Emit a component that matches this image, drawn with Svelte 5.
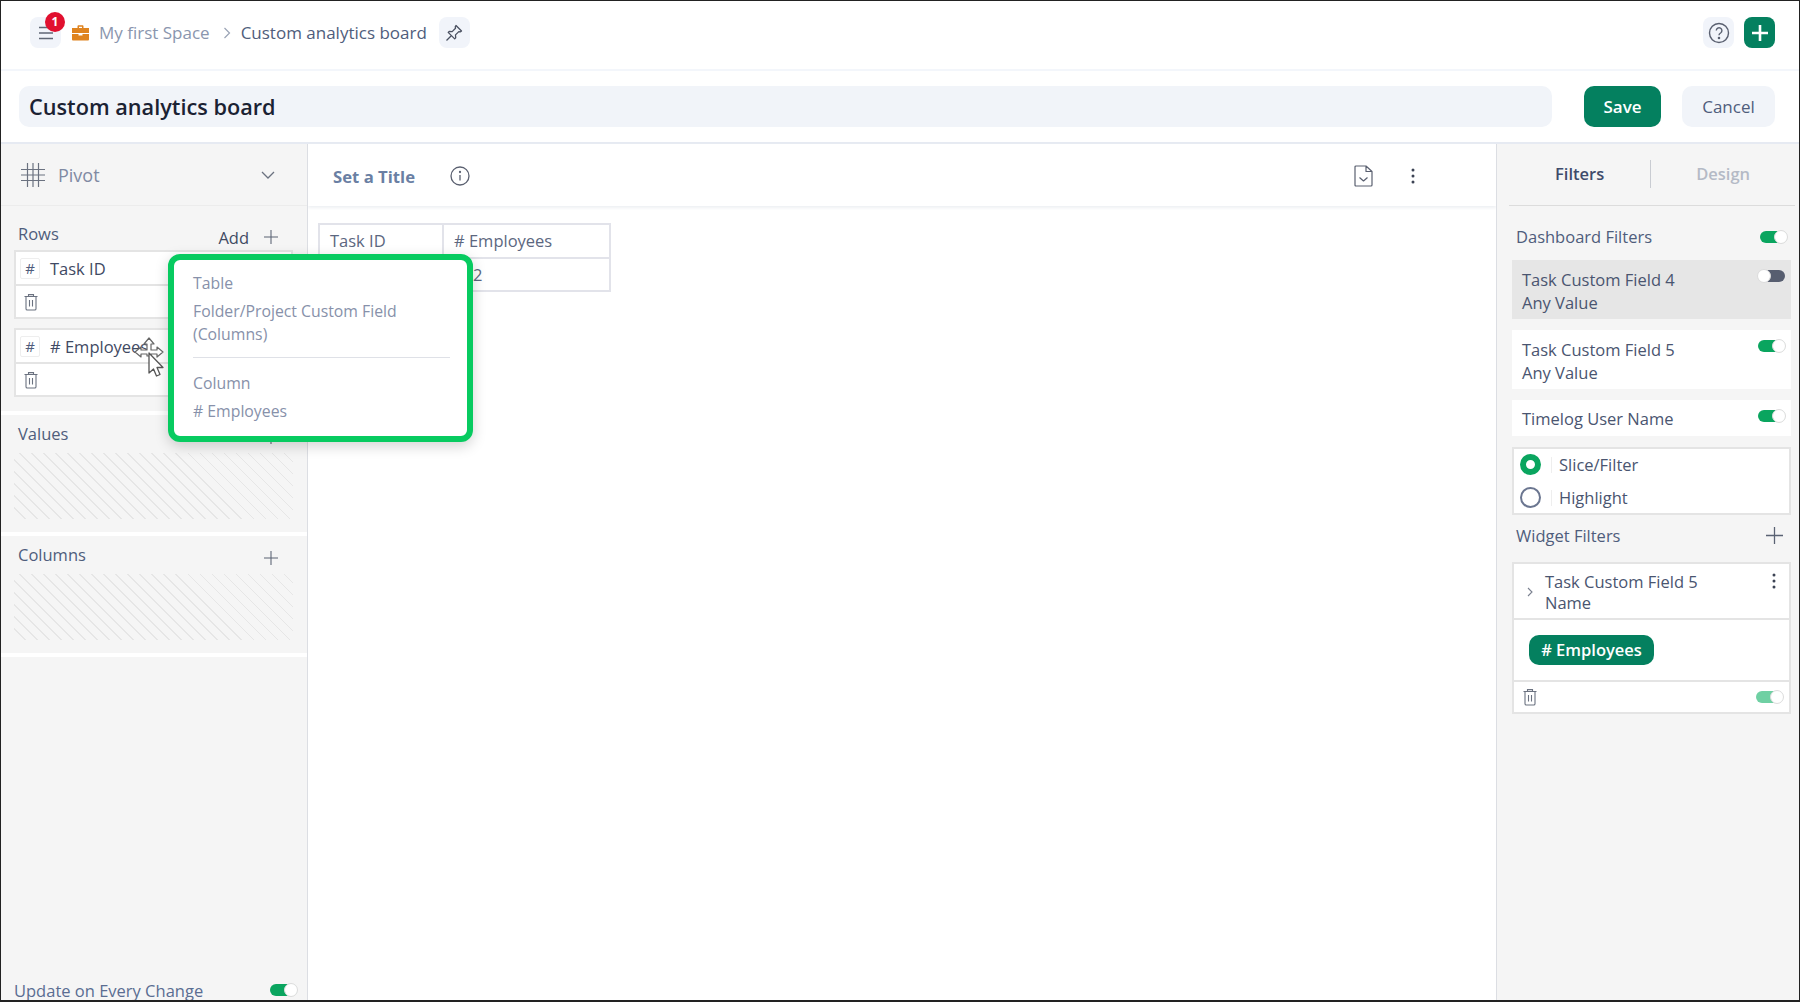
<script>
  const rowFields = ['Task ID', '# Employees'];
</script>

{#snippet trash()}
  <svg class="trash" width="16" height="18" viewBox="0 0 16 18" fill="none" stroke="#6b7280" stroke-width="1.1"><path d="M1.5 3.5h13M5.5 3.5V1.6h5v1.9M3 3.5v12.2q0 1.3 1.3 1.3h7.4q1.3 0 1.3-1.3V3.5M6.5 7v6.5M9.5 7v6.5"/></svg>
{/snippet}
{#snippet plus(size = 16)}
  <svg width={size} height={size} viewBox="0 0 16 16" stroke="#5a6273" stroke-width="1.2"><path d="M8 0v16M0 8h16"/></svg>
{/snippet}
{#snippet kebab()}
  <svg width="4" height="16" viewBox="0 0 4 16" fill="#3c4354"><circle cx="2" cy="2" r="1.5"/><circle cx="2" cy="8" r="1.5"/><circle cx="2" cy="14" r="1.5"/></svg>
{/snippet}

<div class="page">
  <header class="topbar">
    <button class="iconbtn menu">
      <svg width="16" height="14" viewBox="0 0 16 14" stroke="#5f6675" stroke-width="1.3"><path d="M1 1.5h14M1 7h14M1 12.5h14"/></svg>
      <span class="badge">1</span>
    </button>
    <svg class="case" width="17" height="16" viewBox="0 0 17 16"><path fill="#df8420" d="M5.5 3V1.2Q5.5.3 6.4.3h4.2q.9 0 .9.9V3H17v5H0V3zM7 3h3V1.8H7zM0 9h6.5v1.6h4V9H17v5.6q0 .9-.9.9H.9q-.9 0-.9-.9z"/></svg>
    <span class="crumb">My first Space</span>
    <svg class="sep" width="8" height="12" viewBox="0 0 8 12" fill="none" stroke="#9aa3b5" stroke-width="1.2"><path d="M1.5 1l5 5-5 5"/></svg>
    <span class="crumb current">Custom analytics board</span>
    <button class="iconbtn pin">
      <svg width="18" height="18" viewBox="0 0 18 18" fill="none" stroke="#4a5060" stroke-width="1.3" stroke-linejoin="round"><path d="M11 1.500l5.500 5.500-1 .8-1.700-.2-3.300 3.300.2 3-1 1-6.500-6.500 1-1 3 .2 3.300-3.300-.2-1.700zM6 12l-4.500 4.500"/></svg>
    </button>
    <span class="spacer"></span>
    <button class="iconbtn help">
      <svg width="22" height="22" viewBox="0 0 22 22" fill="none" stroke="#5a6070" stroke-width="1.4"><circle cx="11" cy="11" r="9.500"/><path d="M8.300 8.600a2.800 2.800 0 1 1 4.300 2.400c-1 .6-1.600 1.100-1.600 2.200"/><circle cx="11" cy="16" r=".6" fill="#5a6070"/></svg>
    </button>
    <button class="iconbtn add">
      <svg width="16" height="16" viewBox="0 0 16 16" stroke="#fff" stroke-width="2.600"><path d="M8 0v16M0 8h16"/></svg>
    </button>
  </header>

  <div class="titlebar">
    <div class="titleinput">Custom analytics board</div>
    <button class="btn save">Save</button>
    <button class="btn cancel">Cancel</button>
  </div>

  <main class="body">
    <aside class="left">
      <div class="pivot">
        <svg width="24" height="24" viewBox="0 0 24 24" stroke="#6b7280" stroke-width="1.200"><path d="M6.500 0v24M12 0v24M17.500 0v24M0 6.500h24M0 12h24M0 17.500h24"/></svg>
        <span class="pivotname">Pivot</span>
        <svg class="chev" width="14" height="8" viewBox="0 0 14 8" fill="none" stroke="#6b7280" stroke-width="1.300"><path d="M1 1l6 6 6-6"/></svg>
      </div>

      <section class="sec rows">
        <div class="sechead">
          <span>Rows</span>
          <span class="addwrap"><span class="addtxt">Add</span>{@render plus(14)}</span>
        </div>
        {#each rowFields as f}
          <div class="fieldcard">
            <div class="fieldtop"><span class="hash">#</span><span class="fname">{f}</span></div>
            <div class="fieldbot">{@render trash()}</div>
          </div>
        {/each}
      </section>

      <section class="sec">
        <div class="sechead"><span>Values</span><span class="addwrap">{@render plus(14)}</span></div>
        <div class="hatch"></div>
      </section>

      <section class="sec">
        <div class="sechead"><span>Columns</span><span class="addwrap">{@render plus(14)}</span></div>
        <div class="hatch"></div>
      </section>

      <div class="update">
        <span>Update on Every Change</span>
        <span class="tog on"></span>
      </div>
    </aside>

    <section class="center">
      <div class="centerhead">
        <span class="settitle">Set a Title</span>
        <svg class="info" width="20" height="20" viewBox="0 0 20 20" fill="none" stroke="#5a6070" stroke-width="1.300"><circle cx="10" cy="10" r="9"/><path d="M10 9v5.500"/><circle cx="10" cy="6" r=".5"/></svg>
        <span class="spacer"></span>
        <svg class="doc" width="19" height="22" viewBox="0 0 19 22" fill="none" stroke="#5a6070" stroke-width="1.200" stroke-linejoin="round"><path d="M2 1h10l6 5.500V20q0 1-1 1H2q-1 0-1-1V2q0-1 1-1zM12 1v5.500h6M5.500 12.500l4 3.500 4-3.500"/></svg>
        <span class="ckebab">{@render kebab()}</span>
      </div>
      <div class="tablewrap">
        <table>
          <thead><tr><th class="c1">Task ID</th><th class="c2"># Employees</th></tr></thead>
          <tbody><tr><td></td><td class="num">2</td></tr></tbody>
        </table>
      </div>
    </section>

    <aside class="right">
      <div class="tabs">
        <span class="tab active">Filters</span>
        <span class="tabsep"></span>
        <span class="tab">Design</span>
      </div>
      <div class="rhead"><span>Dashboard Filters</span><span class="tog on dash"></span></div>
      <div class="fcard grey"><div>Task Custom Field 4<br />Any Value</div><span class="tog off"></span></div>
      <div class="fcard"><div>Task Custom Field 5<br />Any Value</div><span class="tog on"></span></div>
      <div class="fcard single"><div>Timelog User Name</div><span class="tog on"></span></div>
      <div class="radios">
        <div class="radio"><span class="dot sel"></span><span class="vl"></span>Slice/Filter</div>
        <div class="radio"><span class="dot"></span><span class="vl"></span>Highlight</div>
      </div>
      <div class="rhead widget"><span>Widget Filters</span>{@render plus(17)}</div>
      <div class="wcard">
        <div class="wtop">
          <svg class="wchev" width="6" height="10" viewBox="0 0 6 10" fill="none" stroke="#7a8090" stroke-width="1.100"><path d="M1 1l4 4-4 4"/></svg>
          <div class="wname">Task Custom Field 5<br />Name</div>
          <span class="wkebab">{@render kebab()}</span>
        </div>
        <div class="wmid"><span class="pill"># Employees</span></div>
        <div class="wbot">{@render trash()}<span class="tog light"></span></div>
      </div>
    </aside>

    <div class="popover">
      <p class="first">Table</p>
      <p class="val">Folder/Project Custom Field<br />(Columns)</p>
      <hr />
      <p>Column</p>
      <p class="last"># Employees</p>
    </div>

    <svg class="cursor" width="36" height="44" viewBox="0 0 36 44">
      <path d="M15 1l5 6h-3v6h6v-3l6 5-6 5v-3h-6v2h-4v-2H7v3l-6-5 6-5v3h6V7h-3z" fill="#fff" stroke="#666" stroke-width="1.200" stroke-linejoin="round"/>
      <path d="M15 16v20l4.500-4 3 7 3.500-1.500-3-7h6z" fill="#fff" stroke="#555" stroke-width="1.300" stroke-linejoin="round"/>
    </svg>
  </main>
</div>

<style>
  :global(body) { margin: 0; background: #fff; }
  .page {
    width: 1800px; height: 1002px; box-sizing: border-box;
    border: 1px solid #222; border-bottom-width: 2px; overflow: hidden;
    display: flex; flex-direction: column;
    font-family: "Open Sans", "Noto Sans", sans-serif;
    font-size: 16.500px; color: #4a5570;
  }
  .spacer { flex: 1; }
  button { border: 0; padding: 0; font: inherit; }

  .topbar {
    height: 70px; box-sizing: border-box; flex: none;
    display: flex; align-items: center;
    padding: 0 24px 5px 29px;
    border-bottom: 2px solid #f3f6fb;
  }
  .iconbtn {
    width: 31px; height: 31px; border-radius: 8px; background: #f1f4fa;
    display: flex; align-items: center; justify-content: center; position: relative;
  }
  .badge {
    position: absolute; left: 15px; top: -5px; width: 20px; height: 20px; border-radius: 50%;
    background: #e1102f; color: #fff; font-size: 12px; font-weight: 700; line-height: 20px; text-align: center;
  }
  .case { margin-left: 11px; }
  .crumb { font-size: 17px; color: #8a96ae; margin-left: 10px; white-space: nowrap; }
  .sep { margin: 0 10px 0 13px; }
  .crumb.current { color: #4f5d7c; margin-left: 0; }
  .pin { margin-left: 12px; }
  .add { background: #04805f; margin-left: 10px; }

  .titlebar {
    height: 73px; box-sizing: border-box; flex: none;
    display: flex; align-items: center;
    padding: 0 24px 0 18px;
    border-bottom: 2px solid #e6eaf2;
  }
  .titleinput {
    width: 1533px; height: 41px; line-height: 41px; box-sizing: border-box; padding-left: 10px;
    background: #f1f4f9; border-radius: 10px;
    font-size: 21.700px; font-weight: 600; color: #1b2233;
  }
  .btn { height: 41px; border-radius: 10px; font-size: 17px; }
  .save { width: 77px; margin-left: 32px; background: #04805f; color: #fff; font-weight: 600; }
  .cancel { width: 93px; margin-left: 21px; background: #f1f4f9; color: #4f5d7c; }

  .body { flex: 1; min-height: 0; display: flex; position: relative; }

  .left {
    width: 307px; flex: none; box-sizing: border-box;
    border-right: 1px solid #dcdee3;
    background: #f5f5f5; display: flex; flex-direction: column; position: relative;
  }
  .pivot {
    height: 62px; flex: none; box-sizing: border-box; padding: 1px 32px 0 20px;
    display: flex; align-items: center; background: #f5f5f5;
    border-bottom: 1px solid #ececec;
    font-size: 18px; color: #7f8aa3;
  }
  .pivotname { margin-left: 13px; flex: 1; }

  .sec { background: #f5f5f5; padding: 0 14px 13px 13px; margin-bottom: 4px; box-shadow: 0 4px 0 #fff; }
  .sec.rows { padding-bottom: 14px; }
  .sechead {
    height: 38px; display: flex; align-items: flex-start; justify-content: space-between;
    padding: 7px 0 0 4px; box-sizing: border-box; color: #4f5d7c;
  }
  .rows .sechead { height: 44px; padding-top: 16px; }
  .addwrap { display: flex; align-items: center; color: #3f4a63; padding: 8px 15px 0 0; }
  .rows .addwrap { padding-top: 0; height: 30px; margin-top: 0; }
  .addtxt { margin-right: 15px; }
  .fieldcard {
    height: 69px; box-sizing: border-box; border: 2px solid #e4e4e4; background: #fff;
    margin-bottom: 9px;
  }
  .fieldcard:last-child { margin-bottom: 0; }
  .fieldtop { height: 34px; box-sizing: border-box; border-bottom: 2px solid #e4e4e4; display: flex; align-items: center; padding-left: 4px; }
  .hash {
    width: 20px; height: 21px; box-sizing: border-box; border: 1px solid #eee; border-radius: 2px;
    display: flex; align-items: center; justify-content: center; color: #4f5d7c; font-size: 15px;
  }
  .fname { margin-left: 10px; color: #3f4a63; white-space: nowrap; }
  .fieldbot { padding: 7px 0 0 7px; }
  .trash { display: block; }
  .hatch {
    height: 66px;
    background: repeating-linear-gradient(45deg, transparent 0 7.500px, #e6e6e6 7.500px 8.500px);
  }
  .update {
    margin-top: auto; height: 24px; flex: none; display: flex; align-items: center; justify-content: space-between;
    padding: 0 10px 0 13px; color: #5a6d92; white-space: nowrap; margin-bottom: -2px;
  }

  .tog {
    display: inline-block; width: 27px; height: 12px; border-radius: 6px; position: relative; flex: none;
    background: #0aa55f;
  }
  .tog::after {
    content: ""; position: absolute; top: -1px; right: -1px; width: 14px; height: 14px; box-sizing: border-box;
    border-radius: 50%; background: #fff; border: 1px solid #dcdcdc;
  }
  .tog.off { background: #575e70; }
  .tog.off::after { right: auto; left: -1px; }
  .tog.light { background: #6fd0a3; }

  .center { flex: 1; min-width: 0; display: flex; flex-direction: column; }
  .centerhead {
    height: 62px; box-sizing: border-box; flex: none; display: flex; align-items: center; padding: 3px 81px 0 25px;
    box-shadow: 0 2px 3px #eef0f3;
  }
  .settitle { font-weight: 700; font-size: 16.700px; color: #6a7fa3; }
  .info { margin-left: 35px; position: relative; top: -1px; }
  .doc { position: relative; top: -1px; }
  .ckebab { margin-left: 38px; display: flex; position: relative; top: -1px; }
  .tablewrap { padding: 17px 0 0 10px; }
  table { border-collapse: collapse; }
  th, td { border: 2px solid #e2e3ea; box-sizing: border-box; padding: 0 0 0 10px; text-align: left; }
  th { height: 34px; font-weight: 400; font-size: 16.500px; color: #5c6780; white-space: nowrap; padding-bottom: 2px; }
  td { height: 33px; color: #5c6780; }
  .c1 { width: 124px; }
  .c2 { width: 167px; }
  .num { padding-left: 29px; }

  .right {
    width: 303px; flex: none; box-sizing: border-box; background: #f5f5f5;
    border-left: 1px solid #dcdee3; padding: 0 8px 0 15px;
  }
  .tabs {
    height: 62px; box-sizing: border-box; margin: 0 -4px 0 -3px; display: flex; align-items: center;
    border-bottom: 1px solid #dcdcdc; padding: 0 0 2px 46px; font-weight: 600; font-size: 16.500px; color: #b4bac6;
  }
  .tab.active { color: #3e4b6b; }
  .tabsep { width: 1px; height: 28px; background: #c9ccd2; margin: 0 45px 0 46px; }
  .rhead {
    height: 54px; padding: 7px 4px 0; display: flex; align-items: center; justify-content: space-between; color: #4f5d7c;
    box-sizing: border-box;
  }
  .rhead.widget { height: 47px; padding: 0 8px 6px 4px; }
  .fcard {
    height: 59px; box-sizing: border-box; background: #fff; margin-bottom: 11px;
    padding: 8px 6px 0 10px; line-height: 23px; display: flex; justify-content: space-between; align-items: flex-start;
    color: #4a5570;
  }
  .fcard .tog { margin-top: 2px; }
  .fcard.grey { background: #e6e6e6; }
  .fcard.single { height: 36px; margin-bottom: 11px; padding-top: 7px; }
  .fcard.single .tog { margin-top: 3px; }
  .radios { height: 68px; box-sizing: border-box; background: #fff; border: 2px solid #e4e4e4; color: #4a5570; }
  .radio { height: 33px; display: flex; align-items: center; padding-left: 6px; }
  .radio:first-child { margin-top: -1px; }
  .dot { width: 21px; height: 21px; box-sizing: border-box; border: 2px solid #6b7690; border-radius: 50%; flex: none; background: #fff; }
  .dot.sel { border: 6px solid #0aa55f; }
  .vl { width: 1px; height: 16px; background: #eee; margin: 0 7px 0 10px; }
  .wcard { height: 152px; box-sizing: border-box; background: #fff; border: 2px solid #e4e4e4; }
  .wtop { height: 56px; box-sizing: border-box; border-bottom: 2px solid #e4e4e4; position: relative; padding: 7px 0 0 31px; line-height: 21px; }
  .wchev { position: absolute; left: 13px; top: 23px; }
  .wkebab { position: absolute; right: 13px; top: 9px; display: flex; }
  .wmid { height: 62px; box-sizing: border-box; border-bottom: 2px solid #e4e4e4; padding: 15px 0 0 15px; }
  .pill {
    display: inline-block; width: 125px; height: 30px; line-height: 29px; text-align: center; border-radius: 10px;
    background: #04805f; color: #fff; font-weight: 600;
  }
  .wbot { display: flex; justify-content: space-between; align-items: center; padding: 6px 6px 0 8px; }

  .popover {
    position: absolute; left: 167px; top: 110px; width: 305px; height: 188px; box-sizing: border-box;
    border: 6px solid #07cb60; border-radius: 12px; background: #fff;
    box-shadow: 0 4px 14px rgba(0,0,0,.18);
    padding: 12px 17px 0 19px; color: #8791aa; font-size: 15.800px; line-height: 23px;
  }
  .popover p { margin: 0; }
  .popover .val { margin-top: 5px; }
  .popover hr { border: 0; border-top: 1px solid #dfe1e7; margin: 11px 0 14px; }
  .popover .last { margin-top: 5px; }

  .cursor { position: absolute; left: 133px; top: 193px; pointer-events: none; }
</style>
